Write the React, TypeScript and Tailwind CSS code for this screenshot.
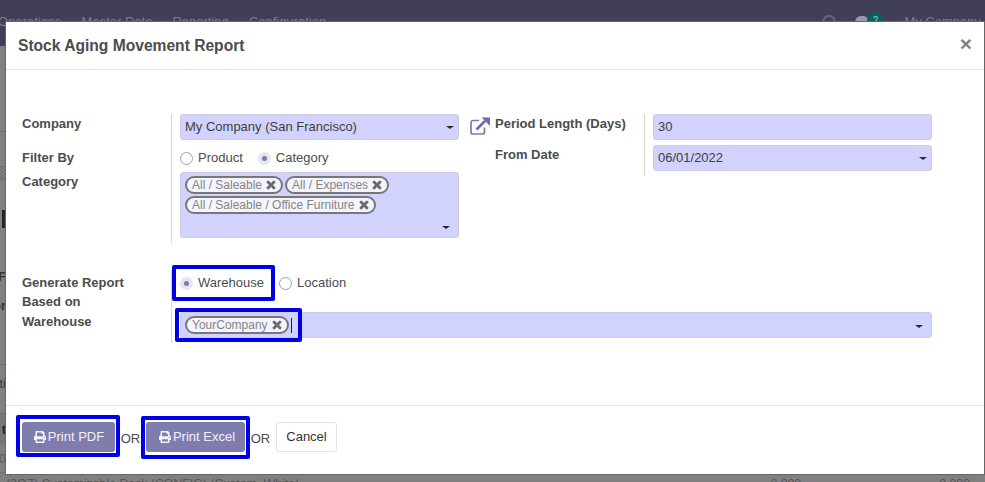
import React from "react";
import { FaPrint, FaTimes } from "react-icons/fa";

const font = { fontFamily: '"Liberation Sans", Arial, sans-serif' };

function Caret({ className = "" }: { className?: string }) {
  return <span className={`block w-0 h-0 border-x-[4px] border-t-[3px] border-x-transparent border-t-[#2a2a2a] ${className}`} />;
}

function Tag({ label }: { label: string }) {
  return (
    <span className="inline-flex items-center h-[18px] rounded-full border-2 border-[#777777] bg-[#f4f4fd] pl-[5px] pr-[4px] text-[12px] leading-none text-[#858585] whitespace-nowrap">
      {label}
      <FaTimes className="ml-[3px] text-[#666666]" size={12} stroke="currentColor" strokeWidth={30} />
    </span>
  );
}

function Radio({ label, checked }: { label: string; checked?: boolean }) {
  return (
    <span className="inline-flex items-center gap-[5px] text-[13px] text-[#4c4c4c]">
      {checked ? (
        <span className="flex items-center justify-center w-[13px] h-[13px] rounded-full bg-[#e6e6f0]">
          <span className="w-[5px] h-[5px] rounded-full bg-[#7c7bad]" />
        </span>
      ) : (
        <span className="w-[13px] h-[13px] rounded-full border border-[#a0a0ac] bg-white" />
      )}
      {label}
    </span>
  );
}

function Field({ value, caret }: { value: string; caret?: boolean }) {
  return (
    <div className="flex items-center justify-between w-[279px] h-[26px] rounded-[3px] border border-[#cdcde0] bg-[#d2d2ff] pl-[4px] pr-[4px] text-[13px] text-[#3d3d3d]">
      <span>{value}</span>
      {caret && <Caret />}
    </div>
  );
}

function Backdrop() {
  return (
    <div className="flex flex-col h-[482px] bg-[#808080] [&>*]:shrink-0">
      <div className="flex items-center justify-between h-[46px] bg-[#403e58] text-[13px] text-[#7e7c93]">
        <div className="flex gap-[20px] -ml-[2px] pb-[2px]">
          <span>Operations</span>
          <span>Master Data</span>
          <span>Reporting</span>
          <span>Configuration</span>
        </div>
        <div className="flex items-center pr-[4px]">
          <span className="w-[14px] h-[14px] rounded-full border-2 border-[#66647e] mr-[19px] -mt-[2px]" />
          <span className="w-[14px] h-[12px] rounded-full bg-[#9a99a6] -mt-[2px]" />
          <span className="flex items-center justify-center w-[16px] h-[16px] rounded-full bg-[#0b5f5d] text-[10px] text-[#9fc9c6] -ml-[2px] -mt-[6px] mr-[21px]">2</span>
          <span className="pb-[2px]">My Company</span>
        </div>
      </div>
      <div className="h-[86px] border-b border-[#6f6f6f]" />
      <div className="h-[34px]" />
      <div className="h-[14px] bg-[repeating-conic-gradient(#727272_0_25%,#808080_0_50%)] bg-[length:4px_4px] border-y border-[#6f6f6f]" />
      <div className="h-[30px]" />
      <div className="h-[18px] w-[4px] ml-[2px] bg-[#2a2522]" />
      <div className="h-[38px]" />
      <div className="flex flex-col gap-[11px] h-[99px] border-b border-[#6f6f6f] text-[13px] text-[#333333] w-[6px] overflow-hidden items-end">
        <span className="font-bold mt-[1px]">F</span>
        <span className="font-bold leading-[16px]">or</span>
      </div>
      <div className="flex items-start justify-end w-full h-[49px] pt-[9px] border-b border-[#6f6f6f] text-[13px] text-[#3a3a3a] pr-[979px]">ti</div>
      <div className="flex items-center justify-end w-full h-[31px] bg-[#777777] text-[13px] text-[#222222] font-bold pr-[979px]">t</div>
      <div className="flex items-center justify-end h-[28px] border-b border-[#6f6f6f] text-[13px] text-[#5a5a5a] pr-[979px]">0</div>
      <div className="flex justify-between pt-[5px] pl-[6px] pr-[15px] text-[12.3px] leading-none text-[#555555] whitespace-nowrap">
        <span>(2OZ) Customizable Desk (CONFIG) (Custom, White)</span>
        <span className="flex gap-[138px]"><span>0.000</span><span>0.000</span></span>
      </div>
    </div>
  );
}

function Highlight({ className }: { className: string }) {
  return <span className={`absolute border-[4px] border-[#0000e6] rounded-[2px] pointer-events-none ${className}`} />;
}

export default function App() {
  return (
    <div className="relative w-[985px] h-[482px] overflow-hidden" style={font}>
      <Backdrop />
      <div className="absolute left-[5px] top-[21px] flex flex-col w-[980px] h-[454px] border border-[#666666] bg-white">
        <div className="flex items-center justify-between h-[48px] border-b border-[#e2e2e2] pl-[12px] pr-[12px]">
          <h4 className="text-[15.6px] font-bold text-[#4c4c4c]">Stock Aging Movement Report</h4>
          <span className="text-[21px] font-bold leading-none text-[#808080] -mt-[5px]">×</span>
        </div>

        <div className="flex-1 pl-[16px] pt-[44px]">
          <div className="flex h-[129px] text-[13px] text-[#4c4c4c]">
            <div className="w-[149px] font-bold">
              <div className="h-[31px] pt-[2px] leading-[16px]">Company</div>
              <div className="h-[24px] pt-[5px] leading-[16px]">Filter By</div>
              <div className="pt-[5px] leading-[16px]">Category</div>
            </div>
            <div className="w-[288px] border-l border-[#d8d8d8] pl-[8px]">
              <Field value="My Company (San Francisco)" caret />
              <div className="flex items-center gap-[15px] h-[32px] pt-[4px]">
                <Radio label="Product" />
                <Radio label="Category" checked />
              </div>
              <div className="relative w-[279px] h-[66px] rounded-[3px] border border-[#cdcde0] bg-[#d2d2ff] pl-[4px] pt-[3px]">
                <div className="flex flex-wrap gap-x-[2px] gap-y-[2px] w-[240px]">
                  <Tag label="All / Saleable" />
                  <Tag label="All / Expenses" />
                  <Tag label="All / Saleable / Office Furniture" />
                </div>
                <Caret className="absolute right-[8px] bottom-[8px]" />
              </div>
            </div>
            <div className="w-[36px] pl-[11px] pt-[3px]">
              <svg width="20" height="18" viewBox="0 0 20 18" fill="none" aria-hidden="true">
                <path d="M9 3.5H3a2 2 0 0 0-2 2V15a2 2 0 0 0 2 2h9.5a2 2 0 0 0 2-2v-4.5" stroke="#7c7bad" strokeWidth="1.7" />
                <path d="M6.5 12.5 15 4" stroke="#6f6ea3" strokeWidth="2.6" />
                <path d="M11.5 0.5H20V9Z" fill="#6f6ea3" />
              </svg>
            </div>
            <div className="w-[149px] font-bold">
              <div className="h-[31px] pt-[2px] leading-[16px]">Period Length (Days)</div>
              <div className="pt-[2px] leading-[16px]">From Date</div>
            </div>
            <div className="flex flex-col gap-[5px] h-[62px] border-l border-[#d8d8d8] pl-[8px]">
              <Field value="30" />
              <Field value="06/01/2022" caret />
            </div>
          </div>

          <div className="flex h-[73px] mt-[27px] text-[13px] text-[#4c4c4c]">
            <div className="w-[149px] font-bold leading-[19px] pt-[3px]">
              <div>Generate Report</div>
              <div>Based on</div>
              <div className="mt-[1px]">Warehouse</div>
            </div>
            <div className="border-l border-[#d8d8d8] pl-[8px]">
              <div className="flex items-center gap-[15px] h-[26px]">
                <span className="relative flex items-center h-full">
                  <Radio label="Warehouse" checked />
                  <Highlight className="-left-[8px] -right-[11px] -top-[5px] -bottom-[5px]" />
                </span>
                <Radio label="Location" />
              </div>
              <div className="relative flex items-center justify-between w-[752px] h-[26px] mt-[16px] rounded-[3px] border border-[#cdcde0] bg-[#d2d2ff] pl-[4px] pr-[8px]">
                <div className="flex items-center">
                  <Tag label="YourCompany" />
                  <span className="ml-[2px] w-[1px] h-[15px] bg-[#222222]" />
                </div>
                <Caret className="mt-[2px]" />
                <Highlight className="-left-[6px] -top-[5px] w-[127px] h-[34px]" />
              </div>
            </div>
          </div>
        </div>

        <div className="flex items-start h-[69px] border-t border-[#e2e2e2] pl-[16px] pt-[16px] text-[13px]">
          <button className="relative flex items-center justify-center gap-[2px] w-[93px] h-[30px] pl-[1px] rounded-[3px] bg-[#7f7dad] text-[#f2f2f8]">
            <FaPrint size={12} />
            Print PDF
            <Highlight className="-left-[6px] -right-[5px] -top-[7px] -bottom-[5px]" />
          </button>
          <span className="w-[31px] mt-[9px] text-center leading-[16px] text-[#4c4c4c]">OR</span>
          <button className="relative flex items-center justify-center gap-[2px] w-[99px] h-[30px] pl-[3px] rounded-[3px] bg-[#7f7dad] text-[#f2f2f8]">
            <FaPrint size={12} />
            Print Excel
            <Highlight className="-left-[5px] -right-[5px] -top-[6px] -bottom-[7px]" />
          </button>
          <span className="w-[31px] mt-[9px] text-center leading-[16px] text-[#4c4c4c]">OR</span>
          <button className="w-[61px] h-[30px] rounded-[3px] border border-[#e2e2e2] bg-white text-[#333333]">Cancel</button>
        </div>
      </div>
    </div>
  );
}
